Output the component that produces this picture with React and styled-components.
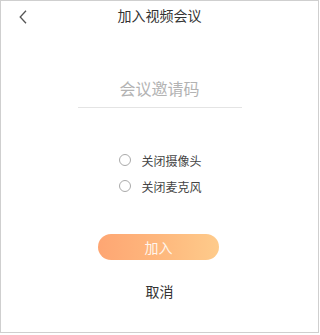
import React from "react";
import styled, { createGlobalStyle } from "styled-components";

const Global = createGlobalStyle`
  html, body { margin: 0; padding: 0; background: #fff; }
  body { font-family: "Noto Sans CJK SC", "Noto Sans", sans-serif; }
  * { box-sizing: border-box; }
`;

const Frame = styled.div`
  width: 319px;
  height: 333px;
  border: 1px solid #cfcfcf;
  background: #fff;
  display: flex;
  flex-direction: column;
  align-items: center;
  overflow: hidden;
`;

const Header = styled.header`
  width: 100%;
  height: 29px;
  display: grid;
  grid-template-columns: 60px 1fr 60px;
  align-items: center;
`;

const Back = styled.button`
  border: 0;
  background: none;
  padding: 2px 0 0 18px;
  height: 29px;
  display: flex;
  align-items: center;
  cursor: pointer;
`;

const Title = styled.h1`
  margin: 0;
  text-align: center;
  font-size: 14px;
  font-weight: 400;
  color: #333;
  line-height: 29px;
`;

const CodeInput = styled.input`
  margin-top: 40px;
  width: 164px;
  height: 38px;
  border: 0;
  border-bottom: 1px solid #e4e4e4;
  outline: none;
  text-align: center;
  font-family: inherit;
  font-size: 16px;
  color: #333;
  padding: 0 0 2px;
  background: transparent;
  &::placeholder { color: #b3b3b3; }
`;

const Options = styled.div`
  margin-top: 39px;
  display: flex;
  flex-direction: column;
  padding-left: 2px;
`;

const Option = styled.label`
  height: 26px;
  display: flex;
  align-items: center;
  gap: 10px;
  font-size: 12px;
  color: #444;
  cursor: pointer;
`;

const Circle = styled.span`
  flex-shrink: 0;
  width: 12px;
  height: 12px;
  border-radius: 50%;
  border: 1px solid #aaa;
  background: #fff;
`;

const JoinButton = styled.button`
  margin-top: 35px;
  width: 121px;
  height: 26px;
  border: 0;
  border-radius: 13px;
  background: linear-gradient(90deg, #fea673 0%, #feb97e 55%, #fecb8b 100%);
  color: #fff5ec;
  font-family: inherit;
  font-size: 14px;
  padding: 0;
  margin-left: -2px;
`;

const Cancel = styled.button`
  margin-top: 21px;
  border: 0;
  background: none;
  font-family: inherit;
  font-size: 14px;
  color: #333;
  line-height: 20px;
  padding: 0;
`;

export default function App() {
  return (
    <>
      <Global />
      <Frame>
        <Header>
          <Back aria-label="back">
            <svg width="8" height="14" viewBox="0 0 8 14">
              <path d="M7 0.8 L1.2 7 L7 13.2" fill="none" stroke="#555" strokeWidth="1.3" />
            </svg>
          </Back>
          <Title>加入视频会议</Title>
          <span />
        </Header>
        <CodeInput placeholder="会议邀请码" />
        <Options>
          <Option><Circle />关闭摄像头</Option>
          <Option><Circle />关闭麦克风</Option>
        </Options>
        <JoinButton>加入</JoinButton>
        <Cancel>取消</Cancel>
      </Frame>
    </>
  );
}
